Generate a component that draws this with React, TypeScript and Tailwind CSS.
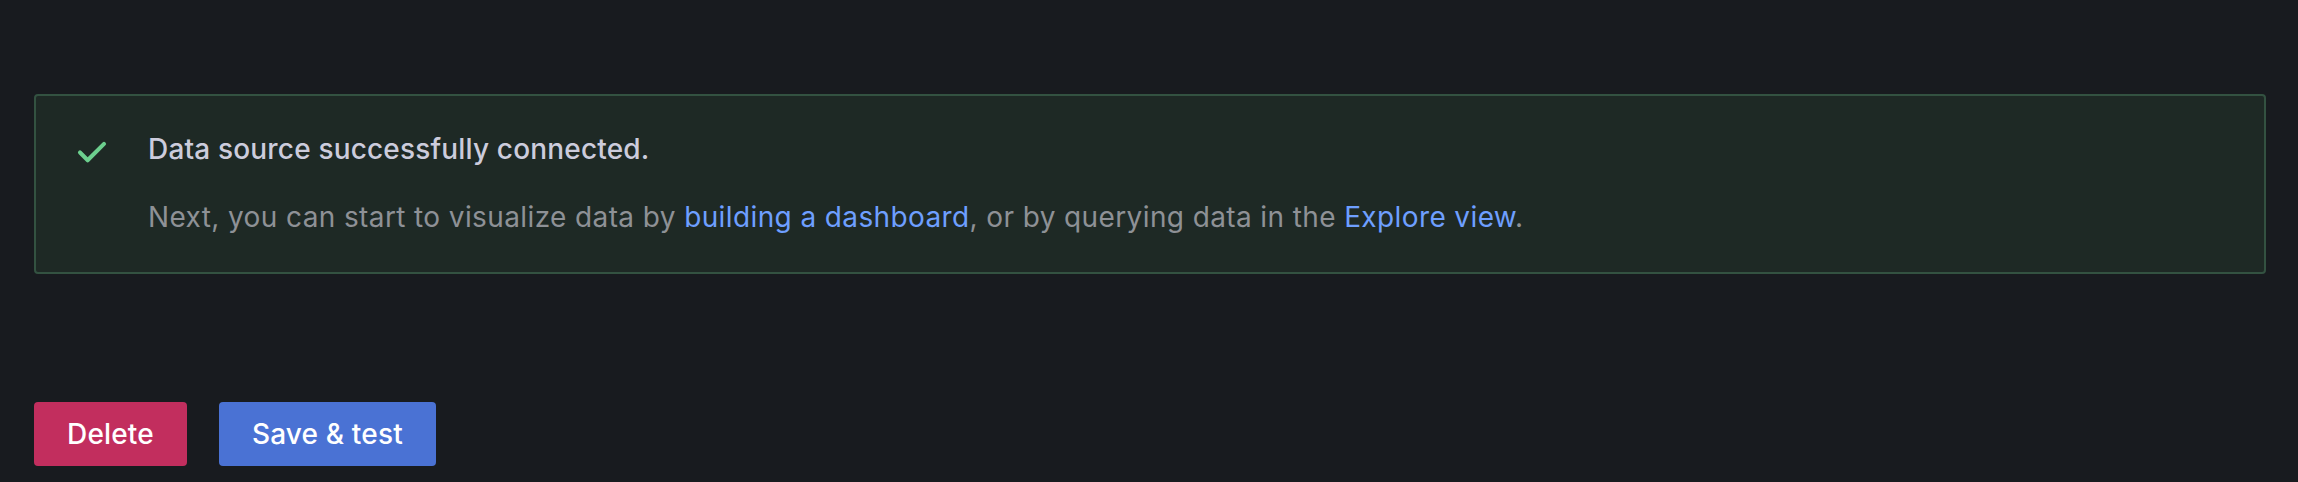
import React from 'react'

function CheckIcon() {
  return (
    <svg viewBox="0 0 24 24" className="h-[48px] w-[48px] shrink-0 fill-[#6ccf8e]">
      <path d="M18.71,7.21a1,1,0,0,0-1.42,0L9.84,14.67,6.71,11.53A1,1,0,1,0,5.29,13l3.84,3.84a1,1,0,0,0,1.42,0l8.16-8.16A1,1,0,0,0,18.71,7.21Z" />
    </svg>
  )
}

export default function App() {
  return (
    <div className="min-h-screen bg-[#181b1f] pl-[34px] pr-[32px] pt-[94px] font-['Inter',sans-serif] tracking-[0.01071em]">
      {/* Test result alert */}
      <div className="flex gap-[32px] rounded-[4px] border-2 border-[#335241] bg-[#1e2925] px-[32px] pt-[32px] pb-[34px]">
        <CheckIcon />
        <div className="flex-1">
          <div className="text-[28px] font-medium leading-[42px] text-[#ccccdc]">
            Data source successfully connected.
          </div>
          <p className="mt-[26px] text-[28px] leading-[42px] tracking-[0.0138em] text-[#8e9196]">
            Next, you can start to visualize data by{' '}
            <a href="#" className="text-[#6e9fff]">building a dashboard</a>, or by querying data in the{' '}
            <a href="#" className="text-[#6e9fff]">Explore view</a>.
          </p>
        </div>
      </div>

      <div className="mt-[128px] flex gap-[32px]">
        <button className="h-[64px] rounded-[4px] bg-[#c22e5e] px-[33px] text-[28px] font-medium text-white">
          Delete
        </button>
        <button className="h-[64px] rounded-[4px] bg-[#4a72d4] px-[33px] text-[28px] font-medium text-white">
          Save &amp; test
        </button>
      </div>
    </div>
  )
}
